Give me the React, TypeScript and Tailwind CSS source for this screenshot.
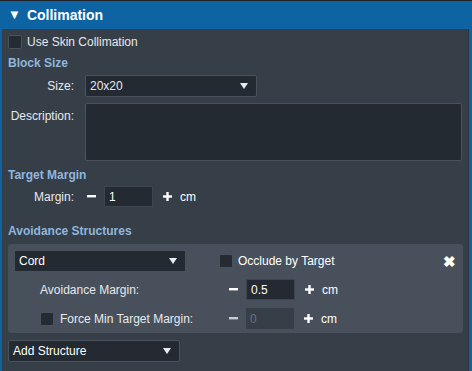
import { useState } from "react";

function Check({ checked = false }: { checked?: boolean }) {
    return (
        <span className="inline-block w-[14px] h-[14px] rounded-[2px] bg-[#242b33] border border-[#4a535d]">
            {checked ? "✓" : null}
        </span>
    );
}

function Arrow() {
    return (
        <svg width="8" height="6" viewBox="0 0 8 6" className="fill-[#e8ecf0]">
            <path d="M0 0h8L4 6z" />
        </svg>
    );
}

function Minus({ dim = false }: { dim?: boolean }) {
    return (
        <svg width="9" height="3" viewBox="0 0 9 3" className={dim ? "fill-[#c8ccd0]" : "fill-white"}>
            <rect width="9" height="2.4" />
        </svg>
    );
}

function Plus() {
    return (
        <svg width="9" height="9" viewBox="0 0 9 9" className="fill-white">
            <rect x="3.3" width="2.4" height="9" />
            <rect y="3.3" width="9" height="2.4" />
        </svg>
    );
}

function Stepper({ value, disabled = false }: { value: string; disabled?: boolean }) {
    return (
        <div className="flex items-center">
            <span className="w-[18px] flex justify-center"><Minus dim={disabled} /></span>
            <div
                className={
                    disabled
                        ? "ml-[4px] w-[48px] h-[21px] flex items-center px-[4px] bg-[#363e47] text-[#6b737c]"
                        : "ml-[4px] w-[49px] h-[21px] flex items-center px-[4px] bg-[#232a31] border border-[#3d4550] text-white"
                }
            >
                {value}
            </div>
            <span className="ml-[7px] w-[14px] flex justify-center"><Plus /></span>
            <span className="ml-[6px] text-white">cm</span>
        </div>
    );
}

export default function App() {
    const [open] = useState(true);

    return (
        <div className="w-[472px] h-[371px] bg-[#2a3038] overflow-hidden font-['Liberation_Sans',Arial,sans-serif] text-[12px] text-[#e6e9ec]">
            <div className="h-[1px] bg-[#1f2328]" />
            <div className="h-[370px] bg-[#0e63a3] px-[2px] flex flex-col">
                <div className="h-[28px] flex items-center pl-[6px] text-white font-bold text-[14px]">
                    <span className="text-[13px] mr-[6px]">{open ? "▼" : "▶"}</span>
                    Collimation
                </div>
                <div className="flex-1 bg-[#363e48] mr-[1px] border-r border-[#2c333b] pl-[6px] pr-[6px]">
                    <div className="flex items-center h-[18px] mt-[4px] gap-[5px]">
                        <Check />
                        <span>Use Skin Collimation</span>
                    </div>
                    <div className="mt-[3px] h-[16px] font-bold text-[#8fb6dc]">Block Size</div>

                    <div className="flex items-center mt-[5px]">
                        <span className="w-[66px] text-right">Size:</span>
                        <div className="ml-[11px] w-[172px] h-[22px] flex items-center justify-between px-[4px] pr-[8px] bg-[#232a31] border border-[#4a525c] rounded-[2px]">
                            <span>20x20</span>
                            <Arrow />
                        </div>
                    </div>

                    <div className="flex items-start mt-[6px]">
                        <span className="w-[66px] text-right mt-[4px]">Description:</span>
                        <div className="ml-[11px] w-[377px] h-[58px] bg-[#232a31] border border-[#4a525c] rounded-[2px]" />
                    </div>

                    <div className="mt-[5px] h-[16px] font-bold text-[#8fb6dc]">Target Margin</div>
                    <div className="flex items-center mt-[4px]">
                        <span className="w-[66px] text-right">Margin:</span>
                        <span className="ml-[8px]"><Stepper value="1" /></span>
                    </div>

                    <div className="mt-[15px] h-[16px] font-bold text-[#8fb6dc]">Avoidance Structures</div>

                    <div className="mt-[6px] w-[455px] h-[89px] bg-[#48515b] rounded-[3px] px-[7px] pt-[7px]">
                        <div className="flex items-center">
                            <div className="w-[170px] h-[20px] flex items-center justify-between px-[4px] pr-[8px] bg-[#232a31]">
                                <span className="text-white">Cord</span>
                                <Arrow />
                            </div>
                            <span className="ml-[34px] flex items-center gap-[5px]">
                                <Check />
                                <span className="text-white">Occlude by Target</span>
                            </span>
                            <span className="ml-auto mr-[0px] text-white font-bold text-[15px] leading-none">✖</span>
                        </div>
                        <div className="flex items-center mt-[8px]">
                            <span className="ml-[25px] w-[184px]">Avoidance Margin:</span>
                            <Stepper value="0.5" />
                        </div>
                        <div className="flex items-center mt-[8px]">
                            <span className="ml-[25px] flex items-center gap-[6px] w-[184px]">
                                <Check />
                                <span>Force Min Target Margin:</span>
                            </span>
                            <Stepper value="0" disabled />
                        </div>
                    </div>

                    <div className="mt-[7px] w-[172px] h-[22px] flex items-center justify-between px-[4px] pr-[8px] bg-[#232a31] border border-[#4a525c] rounded-[2px]">
                        <span className="text-white">Add Structure</span>
                        <Arrow />
                    </div>
                </div>
            </div>
        </div>
    );
}
